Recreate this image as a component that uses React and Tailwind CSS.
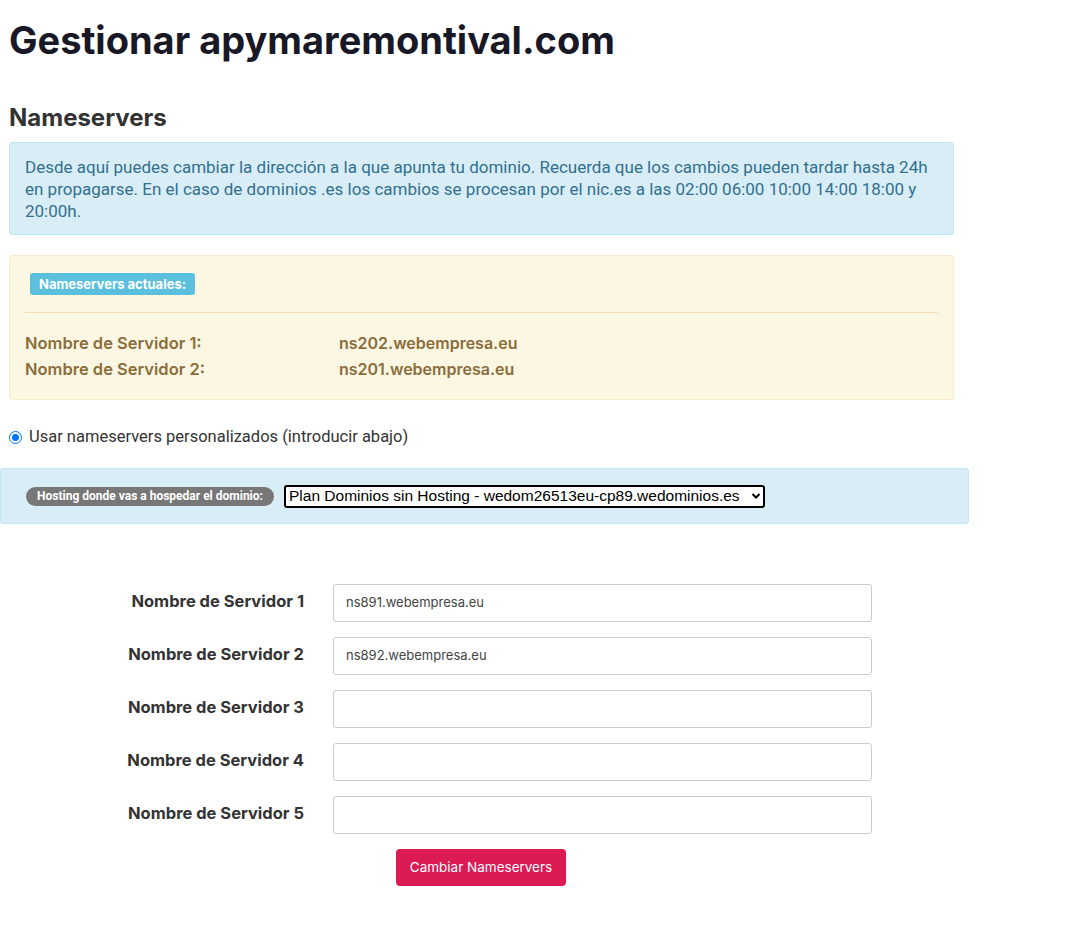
import React from "react";

const labels = [
  { n: 1, v: "ns891.webempresa.eu" },
  { n: 2, v: "ns892.webempresa.eu" },
  { n: 3, v: "" },
  { n: 4, v: "" },
  { n: 5, v: "" },
];

export default function App() {
  return (
    <div className="min-h-[952px] w-[1075px] bg-white font-['Inter',sans-serif] text-[#333]">
      <h1 className="ml-[9px] pt-[17px] text-[38px] font-bold leading-[46px] text-[#181826]">
        Gestionar apymaremontival.com
      </h1>
      <h2 className="ml-[9px] mt-[40px] text-[24px] font-bold leading-[30px] text-[#333]">
        Nameservers
      </h2>

      <div className="ml-[9px] mt-[9px] w-[945px] whitespace-nowrap rounded-[3px] border border-[#bce8f1] bg-[#d9edf7] px-[15px] pt-[13px] pb-[12px] font-['Roboto',sans-serif] text-[17px] leading-[22px] text-[#31708f]">
        Desde aquí puedes cambiar la dirección a la que apunta tu dominio. Recuerda que los cambios pueden tardar hasta 24h
        <br />
        en propagarse. En el caso de dominios .es los cambios se procesan por el nic.es a las 02:00 06:00 10:00 14:00 18:00 y
        <br />
        20:00h.
      </div>

      <div className="ml-[9px] mt-[20px] w-[945px] rounded-[3px] border border-[#faebcc] bg-[#fcf7e3] px-[15px] pt-[15px] pb-[17px] text-[#8a6d3b]">
        <div className="ml-[5px]">
          <span className="inline-block rounded-[3px] bg-[#5bc0de] px-[9px] py-[3px] text-[13px] font-bold leading-[16px] text-white">
            Nameservers actuales:
          </span>
        </div>
        <div className="mt-[17px] border-t border-[#f6deb0]" />
        <div className="mt-[17px] grid grid-cols-[314px_1fr] text-[16.5px] font-semibold leading-[26px]">
          <div>Nombre de Servidor 1:</div>
          <div className="text-[16px]">ns202.webempresa.eu</div>
          <div>Nombre de Servidor 2:</div>
          <div className="text-[16px]">ns201.webempresa.eu</div>
        </div>
      </div>

      <label className="ml-[9px] mt-[26px] flex items-center gap-[7px] font-['Roboto',sans-serif] text-[16.5px] leading-[22px] text-[#333]">
        <span className="flex h-[13px] w-[13px] items-center justify-center rounded-full border-[1.5px] border-[#0075ff] bg-white">
          <span className="h-[7px] w-[7px] rounded-full bg-[#0075ff]" />
        </span>
        Usar nameservers personalizados (introducir abajo)
      </label>

      <div className="mt-[20px] flex h-[56px] w-[969px] items-center rounded-[3px] border border-[#bce8f1] bg-[#d9edf7] pl-[25px]">
        <span className="inline-block w-[248px] whitespace-nowrap rounded-full bg-[#777] py-[2px] text-center font-['Roboto',sans-serif] text-[12px] font-bold leading-[15px] text-white">
          Hosting donde vas a hospedar el dominio:
        </span>
        <div className="ml-[10px] flex h-[23px] w-[481px] items-center justify-between rounded-[3px] border-2 border-black bg-white pl-[3px] pr-[2px] font-['Liberation_Sans',sans-serif] text-[15.5px] leading-[18px] text-black">
          <span className="whitespace-nowrap">Plan Dominios sin Hosting - wedom26513eu-cp89.wedominios.es</span>
          <svg width="10" height="8" viewBox="0 0 10 8" fill="none" stroke="black" strokeWidth="2" className="shrink-0">
            <path d="M1.5 2 L5 5.5 L8.5 2" />
          </svg>
        </div>
      </div>

      <div className="mt-[60px] grid grid-cols-[304px_539px] gap-x-[29px] gap-y-[15px]">
        {labels.map((r) => (
          <React.Fragment key={r.n}>
            <div className="pt-[6px] text-right text-[16.5px] font-bold leading-[22px] text-[#333]">
              Nombre de Servidor {r.n}
            </div>
            <div className="flex h-[38px] items-center rounded-[3px] border border-[#ccc] bg-white px-[12px] text-[13px] text-[#444]">
              {r.v}
            </div>
          </React.Fragment>
        ))}
      </div>

      <div className="mt-[15px] ml-[396px]">
        <button className="h-[37px] w-[170px] rounded-[4px] bg-[#dc1a54] text-[13.5px] text-white">
          Cambiar Nameservers
        </button>
      </div>
    </div>
  );
}
